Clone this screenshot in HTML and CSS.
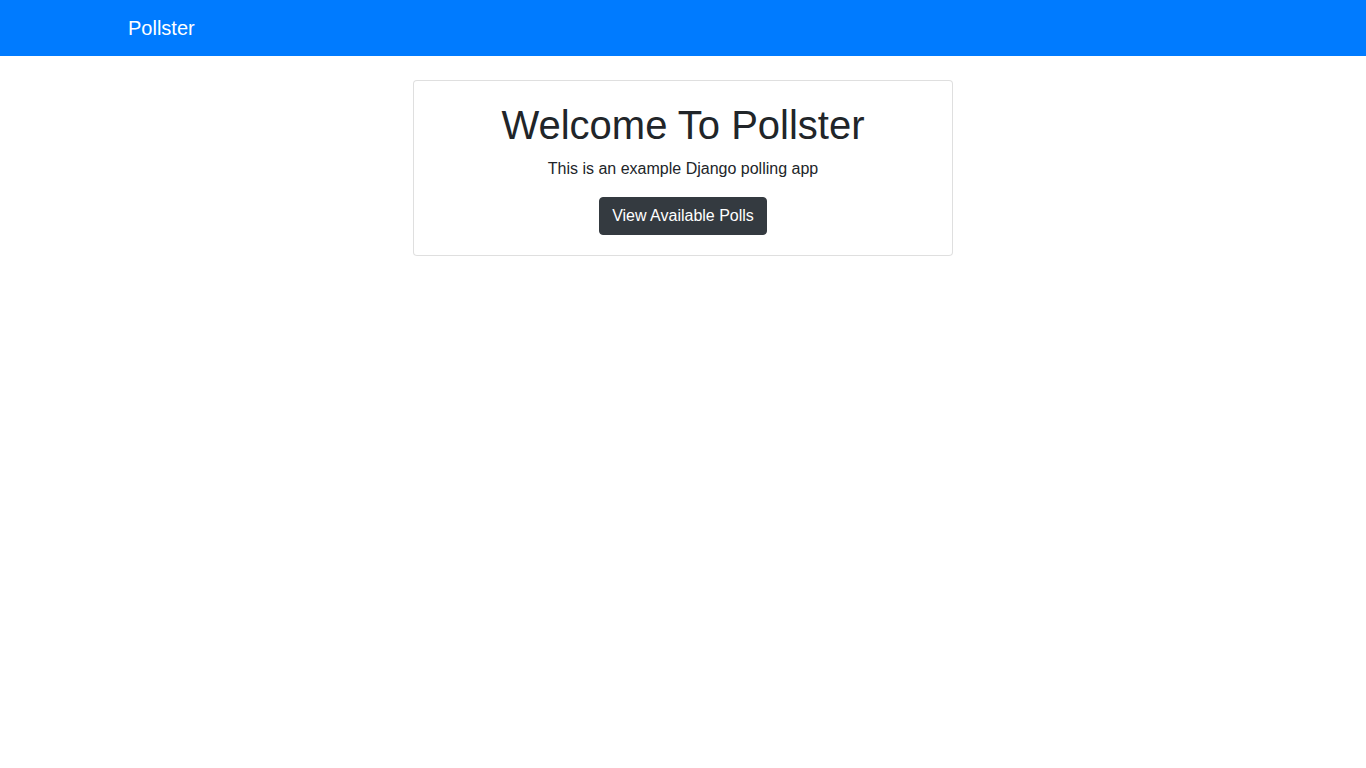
FILE: index.html
```html
<!DOCTYPE html>
<html lang="en">
<head>
<meta charset="utf-8">
<title>Pollster</title>
<link rel="stylesheet" href="styles.css">
</head>
<body>
<nav class="navbar">
  <div class="container">
    <a class="brand" href="#">Pollster</a>
  </div>
</nav>
<main class="main">
  <div class="card">
    <div class="card-body">
      <h1 class="title">Welcome To Pollster</h1>
      <p class="lead">This is an example Django polling app</p>
      <a class="btn" href="#">View Available Polls</a>
    </div>
  </div>
</main>
</body>
</html>
```

FILE: styles.css
```css
* { box-sizing: border-box; }
html, body {
  margin: 0;
  padding: 0;
  background: #fff;
  font-family: "Liberation Sans", Arial, sans-serif;
  font-size: 16px;
  line-height: 1.5;
  color: #212529;
}
.navbar {
  background: #007bff;
  padding: 8px 16px;
}
.container {
  max-width: 1140px;
  margin: 0 auto;
  padding: 0 15px;
}
.brand {
  display: inline-block;
  padding: 5px 0;
  font-size: 20px;
  line-height: 30px;
  color: #fff;
  text-decoration: none;
}
.main {
  display: flex;
  justify-content: center;
  padding-top: 24px;
}
.card {
  width: 540px;
  border: 1px solid rgba(0, 0, 0, 0.125);
  border-radius: 4px;
  background: #fff;
}
.card-body {
  padding: 20px;
  text-align: center;
}
.title {
  margin: 0 0 8px;
  font-size: 40px;
  font-weight: 500;
  line-height: 1.2;
}
.title { font-weight: 400; }
.lead {
  margin: 0 0 16px;
}
.btn {
  display: inline-block;
  padding: 6px 12px;
  font-size: 16px;
  line-height: 24px;
  color: #fff;
  background: #343a40;
  border: 1px solid #343a40;
  border-radius: 4px;
  text-decoration: none;
}
```
